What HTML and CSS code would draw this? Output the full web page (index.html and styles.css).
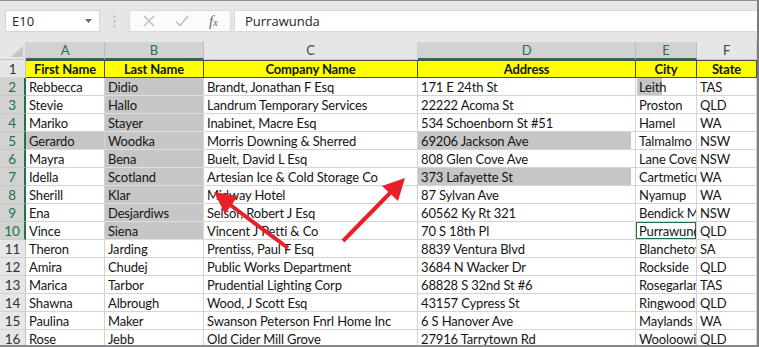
FILE: index.html
```html
<!DOCTYPE html>
<html>
<head>
<meta charset="utf-8">
<link rel="stylesheet" href="styles.css">
</head>
<body>
<div class="frame">
  <div class="toolbar">
    <div class="namebox"><span>E10</span><svg class="caret" width="8" height="5" viewBox="0 0 8 5"><path d="M0 0h7L3.5 4z" fill="#6b6b6b"/></svg></div>
    <div class="grip"><svg width="3" height="13" viewBox="0 0 3 13"><circle cx="1.5" cy="1.5" r="1.1" fill="#b4b4b4"/><circle cx="1.5" cy="6.5" r="1.1" fill="#b4b4b4"/><circle cx="1.5" cy="11.5" r="1.1" fill="#b4b4b4"/></svg></div>
    <div class="fbtns">
      <svg class="fbtn" width="12" height="12" viewBox="0 0 12 12"><path d="M1 1l10 10M11 1L1 11" stroke="#b9b9b9" stroke-width="1.3" fill="none"/></svg>
      <svg class="fbtn" width="14" height="12" viewBox="0 0 14 12"><path d="M1 6.5l4 4L13 1" stroke="#b9b9b9" stroke-width="1.3" fill="none"/></svg>
      <span class="fx">f<span class="x">x</span></span>
    </div>
    <div class="formula">Purrawunda</div>
  </div>

  <div class="sheet">
    <div class="corner"><svg width="12" height="11" viewBox="0 0 12 11"><path d="M12 0V11H0z" fill="#c6c6c6"/></svg></div>
    <div class="ch sel">A</div><div class="ch sel">B</div><div class="ch">C</div><div class="ch sel">D</div><div class="ch sel">E</div><div class="ch">F</div>

    <div class="rh">1</div>
    <div class="c hd">First Name</div><div class="c hd">Last Name</div><div class="c hd">Company Name</div><div class="c hd">Address</div><div class="c hd">City</div><div class="c hd">State</div>

    <div class="rh sel">2</div>
    <div class="c">Rebbecca</div><div class="c g">Didio</div><div class="c">Brandt, Jonathan F Esq</div><div class="c">171 E 24th St</div><div class="c"><span class="part">Leith</span></div><div class="c">TAS</div>

    <div class="rh sel">3</div>
    <div class="c">Stevie</div><div class="c g">Hallo</div><div class="c">Landrum Temporary Services</div><div class="c">22222 Acoma St</div><div class="c">Proston</div><div class="c">QLD</div>

    <div class="rh sel">4</div>
    <div class="c">Mariko</div><div class="c g">Stayer</div><div class="c">Inabinet, Macre Esq</div><div class="c">534 Schoenborn St #51</div><div class="c">Hamel</div><div class="c">WA</div>

    <div class="rh sel">5</div>
    <div class="c g">Gerardo</div><div class="c g">Woodka</div><div class="c">Morris Downing &amp; Sherred</div><div class="c gi">69206 Jackson Ave</div><div class="c">Talmalmo</div><div class="c">NSW</div>

    <div class="rh sel">6</div>
    <div class="c">Mayra</div><div class="c g">Bena</div><div class="c">Buelt, David L Esq</div><div class="c">808 Glen Cove Ave</div><div class="c">Lane Cove</div><div class="c">NSW</div>

    <div class="rh sel">7</div>
    <div class="c">Idella</div><div class="c g">Scotland</div><div class="c">Artesian Ice &amp; Cold Storage Co</div><div class="c gi">373 Lafayette St</div><div class="c">Cartmeticup</div><div class="c">WA</div>

    <div class="rh sel">8</div>
    <div class="c">Sherill</div><div class="c g">Klar</div><div class="c">Midway Hotel</div><div class="c">87 Sylvan Ave</div><div class="c">Nyamup</div><div class="c">WA</div>

    <div class="rh sel">9</div>
    <div class="c">Ena</div><div class="c g">Desjardiws</div><div class="c">Selsor, Robert J Esq</div><div class="c">60562 Ky Rt 321</div><div class="c">Bendick Murrell</div><div class="c">NSW</div>

    <div class="rh sel">10</div>
    <div class="c">Vince</div><div class="c g">Siena</div><div class="c">Vincent J Petti &amp; Co</div><div class="c">70 S 18th Pl</div><div class="c active">Purrawunda</div><div class="c">QLD</div>

    <div class="rh">11</div>
    <div class="c">Theron</div><div class="c">Jarding</div><div class="c">Prentiss, Paul F Esq</div><div class="c">8839 Ventura Blvd</div><div class="c">Blanchetown</div><div class="c">SA</div>

    <div class="rh">12</div>
    <div class="c">Amira</div><div class="c">Chudej</div><div class="c">Public Works Department</div><div class="c">3684 N Wacker Dr</div><div class="c">Rockside</div><div class="c">QLD</div>

    <div class="rh">13</div>
    <div class="c">Marica</div><div class="c">Tarbor</div><div class="c">Prudential Lighting Corp</div><div class="c">68828 S 32nd St #6</div><div class="c">Rosegarland</div><div class="c">TAS</div>

    <div class="rh">14</div>
    <div class="c">Shawna</div><div class="c">Albrough</div><div class="c">Wood, J Scott Esq</div><div class="c">43157 Cypress St</div><div class="c">Ringwood</div><div class="c">QLD</div>

    <div class="rh">15</div>
    <div class="c">Paulina</div><div class="c">Maker</div><div class="c">Swanson Peterson Fnrl Home Inc</div><div class="c">6 S Hanover Ave</div><div class="c">Maylands</div><div class="c">WA</div>

    <div class="rh">16</div>
    <div class="c">Rose</div><div class="c">Jebb</div><div class="c">Old Cider Mill Grove</div><div class="c">27916 Tarrytown Rd</div><div class="c">Wooloowin</div><div class="c">QLD</div>
  </div>

  <svg class="arrows" width="759" height="347" viewBox="0 0 759 347">
    <line x1="288" y1="247" x2="229" y2="203" stroke="#e8202a" stroke-width="4"/>
    <polygon points="214,191 238,195 225,213" fill="#e8202a"/>
    <line x1="343" y1="240" x2="391" y2="191" stroke="#e8202a" stroke-width="4"/>
    <polygon points="405,177 398,200 382,185" fill="#e8202a"/>
  </svg>
</div>
</body>
</html>
```

FILE: styles.css
```css
* { box-sizing: border-box; }
html, body { margin: 0; padding: 0; }
body { width: 759px; height: 347px; overflow: hidden; background: #e6e6e6; }

.frame {
  position: relative;
  width: 759px;
  height: 347px;
  overflow: hidden;
  background: #e6e6e6;
  border-top: 1px solid #8e8e8e;
  border-right: 2px solid #7c7c7c;
  border-bottom: 2px solid #8a8a8a;
}

.toolbar {
  display: flex;
  align-items: stretch;
  height: 41px;
  padding: 9px 0 10px 5px;
  font-family: "Open Sans", "Noto Sans", sans-serif;
  font-size: 13px;
  color: #262626;
}
.namebox {
  width: 95px;
  background: #fff;
  border: 1px solid #d4d4d4;
  display: flex;
  align-items: center;
  justify-content: space-between;
  padding: 0 6px 0 6px;
}
.caret { margin-top: 1px; }
.grip {
  width: 29px;
  display: flex;
  align-items: center;
  justify-content: center;
}
.fbtns {
  width: 102px;
  background: #fbfbfb;
  border: 1px solid #dadada;
  display: flex;
  align-items: center;
  padding: 0 12px 0 13px;
  justify-content: space-between;
}
.fx {
  font-family: "Liberation Serif", serif;
  font-style: italic;
  font-size: 15px;
  color: #6a6a6a;
}
.fx .x { font-size: 11px; }
.formula {
  flex: 1;
  margin-left: 3px;
  background: #fff;
  border: 1px solid #dadada;
  border-right: none;
  display: flex;
  align-items: center;
  padding-left: 10px;
}

.sheet {
  display: grid;
  grid-template-columns: 26px 79px 99px 214px 218px 61px 60px;
  grid-auto-rows: 18px;
  font-family: "Lato", "Carlito", sans-serif;
  font-size: 13px;
  letter-spacing: -0.15px;
  color: #151515;
}
.corner {
  background: #e6e6e6;
  border-right: 1px solid #cfcfcf;
  border-bottom: 1px solid #c6c6c6;
  display: flex;
  align-items: flex-end;
  justify-content: flex-end;
  padding: 0 2px 2px 0;
}
.ch {
  background: #e6e6e6;
  border-right: 1px solid #cfcfcf;
  border-bottom: 1px solid #c6c6c6;
  text-align: center;
  font-size: 13px;
  line-height: 17px;
  color: #444;
}
.ch.sel {
  background: #d2d2d2;
  color: #217346;
  border-bottom: 2px solid #217346;
  border-right-color: #bdbdbd;
}
.rh {
  background: #e6e6e6;
  border-right: 1px solid #c6c6c6;
  border-bottom: 1px solid #d4d4d4;
  text-align: center;
  line-height: 18px;
  font-size: 13.5px;
  color: #333;
}
.rh.sel {
  background: #d2d2d2;
  color: #217346;
  border-right: 2px solid #217346;
  border-bottom-color: #c8c8c8;
}
.c {
  background: #fff;
  border-right: 1px solid #d4d4d4;
  border-bottom: 1px solid #d4d4d4;
  padding-left: 3px;
  line-height: 18px;
  white-space: nowrap;
  overflow: hidden;
}
.c.hd {
  background: #ffff00;
  font-weight: bold;
  text-align: center;
  border-right: 1px solid #4a4a4a;
  border-bottom: 1px solid #4a4a4a;
  border-top: 1px solid #4a4a4a;
  line-height: 16px;
  padding-left: 0;
}
.c.g {
  background: #c6c6c6;
  border-bottom-color: #dedede;
}
.c.gi {
  background: linear-gradient(to right, #c6c6c6 calc(100% - 4px), #fff 0);
}
.part {
  display: block;
  margin-left: -2px;
  padding-left: 2px;
  width: 25px;
  background: #c6c6c6;
  overflow: visible;
}
.c.active {
  box-shadow: inset 0 0 0 1px #217346;
}

.arrows {
  position: absolute;
  top: 0;
  left: 0;
  pointer-events: none;
}
```
